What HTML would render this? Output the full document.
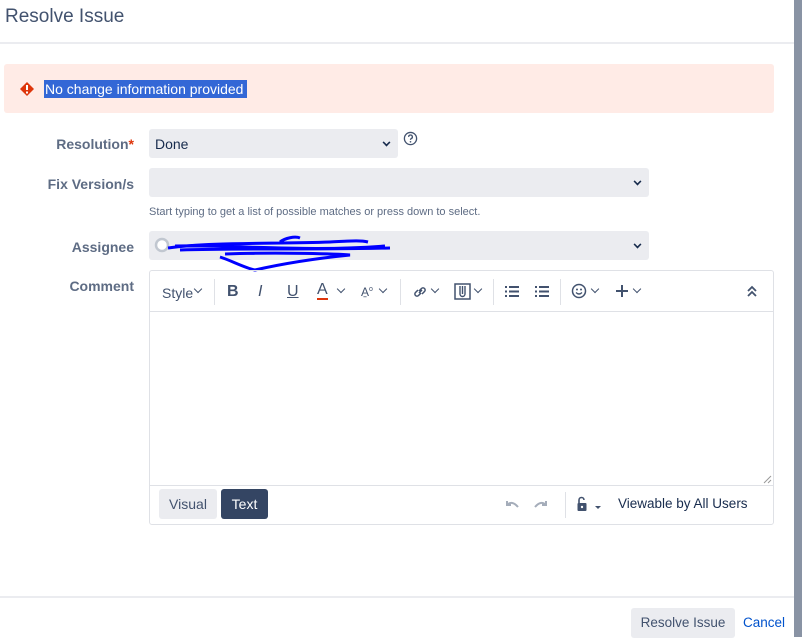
<!DOCTYPE html>
<html><head><meta charset="utf-8"><style>
*{box-sizing:border-box;margin:0;padding:0}
body{width:802px;height:637px;overflow:hidden;background:#fff;font-family:"Liberation Sans",sans-serif;color:#172b4d;position:relative;font-size:14px}
.abs{position:absolute}
.lbl{position:absolute;right:668px;font-size:14px;color:#5e6c84;font-weight:bold}
.sel{position:absolute;background:#ebecf0;border-radius:3px;height:29px;padding:7px 6px;font-size:14px}
.chev{position:absolute;right:8px;top:10px;width:7px;height:7px;border-right:2px solid #172b4d;border-bottom:2px solid #172b4d;transform:rotate(45deg) scale(.8)}
.tb{position:absolute;top:14px;font-size:14px;color:#42526e}
.sep{position:absolute;top:8px;width:1px;height:26px;background:#dfe1e6}
.sc{display:inline-block;width:5px;height:5px;border-right:1.5px solid #42526e;border-bottom:1.5px solid #42526e;transform:rotate(45deg);margin-left:4px;position:relative;top:-3px}
.ch{position:absolute;top:17px;width:6px;height:6px;border-right:1.8px solid #42526e;border-bottom:1.8px solid #42526e;transform:rotate(45deg)}
</style></head><body>
<div class="abs" style="left:5px;top:6px;font-size:19px;color:#42526e">Resolve Issue</div>
<div class="abs" style="left:0;top:42px;width:794px;height:2px;background:#ebecf0"></div>
<div class="abs" style="left:794px;top:0;width:8px;height:637px;background:#8993a4"></div>
<div class="abs" style="left:4px;top:64px;width:770px;height:49px;background:#ffebe6;border-radius:3px"></div>
<svg class="abs" style="left:20px;top:82px" width="14" height="14" viewBox="0 0 14 14"><path d="M7 0 L14 7 L7 14 L0 7Z" fill="#de350b"/><rect x="6" y="3" width="2" height="5" fill="#fff"/><rect x="6" y="9.5" width="2" height="2" fill="#fff"/></svg>
<div class="abs" style="left:44px;top:80px;width:203px;height:18px;padding:1px 1px;background:#3367d6;color:#fff;font-size:14px;line-height:16px;white-space:nowrap">No change information provided</div>

<div class="lbl" style="top:136px">Resolution<span style="color:#de350b">*</span></div>
<div class="sel" style="left:149px;top:129px;width:249px">Done<div class="chev"></div></div>
<svg class="abs" style="left:403px;top:131px" width="15" height="15" viewBox="0 0 16 16"><circle cx="8" cy="8" r="6.5" fill="none" stroke="#42526e" stroke-width="1.4"/><path d="M6 6.3a2 2 0 1 1 2.6 1.9c-.5.2-.6.6-.6 1.2" fill="none" stroke="#42526e" stroke-width="1.4"/><circle cx="8" cy="11.5" r=".9" fill="#42526e"/></svg>

<div class="lbl" style="top:176px">Fix Version/s</div>
<div class="sel" style="left:149px;top:168px;width:500px"><div class="chev"></div></div>
<div class="abs" style="left:149px;top:206px;font-size:11px;color:#5e6c84">Start typing to get a list of possible matches or press down to select.</div>

<div class="lbl" style="top:239px">Assignee</div>
<div class="sel" style="left:149px;top:231px;width:500px"><div class="chev"></div></div>
<svg class="abs" style="left:150px;top:230px" width="250" height="45"><circle cx="12" cy="15" r="6" fill="#fff" stroke="#c1c7d0" stroke-width="2.5"/><path d="M18 18 C60 12,120 14,180 12 C200 11,210 10,218 12 M30 20 C90 18,150 20,240 18 M25 16 C90 15,160 22,235 16 M75 24 C130 22,190 24,200 25 C170 28,140 32,105 40 C95 38,80 30,70 27 M130 12 C135 8,145 6,150 8" fill="none" stroke="#0000ff" stroke-width="3"/></svg>

<div class="lbl" style="top:278px">Comment</div>
<div class="abs" style="left:149px;top:270px;width:625px;height:255px;border:1px solid #dfe1e6;border-radius:3px"></div>
<div class="abs" style="left:150px;top:311px;width:623px;height:1px;background:#dfe1e6"></div>
<div class="abs" style="left:150px;top:485px;width:623px;height:1px;background:#dfe1e6"></div>
<div class="abs" style="left:150px;top:271px;width:623px;height:40px">
 <div class="tb" style="left:12px">Style</div><span class="ch" style="left:45px;top:15px"></span>
 <div class="sep" style="left:64px"></div>
 <div class="tb" style="left:77px;font-weight:bold;font-size:16px;top:12px">B</div>
 <div class="tb" style="left:108px;font-style:italic;font-size:16px;top:12px">I</div>
 <div class="tb" style="left:137px;font-size:16px;top:12px;text-decoration:underline">U</div>
 <div class="tb" style="left:167px;font-size:16px;top:11px;border-bottom:2px solid #de350b;line-height:16px">A</div><span class="ch" style="left:188px;top:15px"></span>
 <div class="tb" style="left:211px;font-size:12px;top:14px">A̱<sup style="font-size:7px">o</sup></div><span class="ch" style="left:230px;top:15px"></span>
 <div class="sep" style="left:250px"></div>
 <svg class="abs" style="left:262px;top:13px" width="16" height="16" viewBox="0 0 16 16"><path d="M7 9l3-3M6 6l-2.5 2.5a2 2 0 0 0 3 3L9 9M10 10l2.5-2.5a2 2 0 0 0-3-3L7 7" fill="none" stroke="#42526e" stroke-width="1.5"/></svg><span class="ch" style="left:282px;top:15px"></span>
 <svg class="abs" style="left:304px;top:12px" width="17" height="17" viewBox="0 0 17 17"><rect x="1" y="1" width="15" height="15" fill="none" stroke="#42526e" stroke-width="1.5"/><path d="M6 3v8a2.5 2.5 0 0 0 5 0V3M8.5 3v8" fill="none" stroke="#42526e" stroke-width="1.4"/></svg><span class="ch" style="left:325px;top:15px"></span>
 <div class="sep" style="left:343px"></div>
 <svg class="abs" style="left:355px;top:14px" width="14" height="13"><g fill="#42526e"><rect x="0" y="1" width="2" height="2"/><rect x="0" y="5.5" width="2" height="2"/><rect x="0" y="10" width="2" height="2"/><rect x="4" y="1" width="10" height="2"/><rect x="4" y="5.5" width="10" height="2"/><rect x="4" y="10" width="10" height="2"/></g></svg>
 <svg class="abs" style="left:385px;top:14px" width="14" height="13"><g fill="#42526e"><rect x="0" y="1" width="2" height="2"/><rect x="0" y="5.5" width="2" height="2"/><rect x="0" y="10" width="2" height="2"/><rect x="4" y="1" width="10" height="2"/><rect x="4" y="5.5" width="10" height="2"/><rect x="4" y="10" width="10" height="2"/></g></svg>
 <div class="sep" style="left:410px"></div>
 <svg class="abs" style="left:421px;top:12px" width="16" height="16" viewBox="0 0 16 16"><circle cx="8" cy="8" r="6.5" fill="none" stroke="#42526e" stroke-width="1.5"/><circle cx="6" cy="6.5" r="1" fill="#42526e"/><circle cx="10" cy="6.5" r="1" fill="#42526e"/><path d="M5 9.5q3 3 6 0" fill="none" stroke="#42526e" stroke-width="1.3"/></svg><span class="ch" style="left:442px;top:15px"></span>
 <svg class="abs" style="left:465px;top:13px" width="14" height="14"><path d="M7 1v12M1 7h12" stroke="#42526e" stroke-width="2"/></svg><span class="ch" style="left:484px;top:15px"></span>
 <svg class="abs" style="left:597px;top:14px" width="10" height="12"><path d="M1 6l4-4 4 4M1 11l4-4 4 4" fill="none" stroke="#42526e" stroke-width="1.8"/></svg>
</div>
<svg class="abs" style="left:763px;top:475px" width="9" height="9"><path d="M1 8L8 1M5 8L8 5" stroke="#999" stroke-width="1"/></svg>
<div class="abs" style="left:159px;top:489px;width:58px;height:30px;background:#ebecf0;border-radius:3px;color:#42526e;text-align:center;line-height:30px">Visual</div>
<div class="abs" style="left:221px;top:489px;width:47px;height:30px;background:#344563;border-radius:3px;color:#fff;text-align:center;line-height:30px">Text</div>
<svg class="abs" style="left:504px;top:498px" width="45" height="12"><path d="M3 3v4h4M3 7q5-5 11 2" fill="none" stroke="#a5adba" stroke-width="2"/><path d="M42 3v4h-4M42 7q-5-5-11 2" fill="none" stroke="#a5adba" stroke-width="2"/></svg>
<div class="abs" style="left:565px;top:492px;width:1px;height:26px;background:#dfe1e6"></div>
<svg class="abs" style="left:576px;top:495px" width="30" height="18"><path d="M3 8V5a2.5 2.5 0 0 1 5 0" fill="none" stroke="#42526e" stroke-width="1.6"/><rect x="1.5" y="8" width="9" height="8" rx="1" fill="#42526e"/><circle cx="6" cy="12" r="1.2" fill="#fff"/><path d="M19 11h6l-3 3z" fill="#42526e"/></svg>
<div class="abs" style="left:618px;top:496px;color:#172b4d;font-size:13.5px">Viewable by All Users</div>

<div class="abs" style="left:0;top:596px;width:794px;height:2px;background:#ebecf0"></div>
<div class="abs" style="left:631px;top:608px;width:104px;height:30px;background:#ebecf0;border-radius:3px;color:#42526e;text-align:center;line-height:30px;font-size:13.5px">Resolve Issue</div>
<div class="abs" style="left:743px;top:615px;color:#0052cc;font-size:13.5px">Cancel</div>
</body></html>
